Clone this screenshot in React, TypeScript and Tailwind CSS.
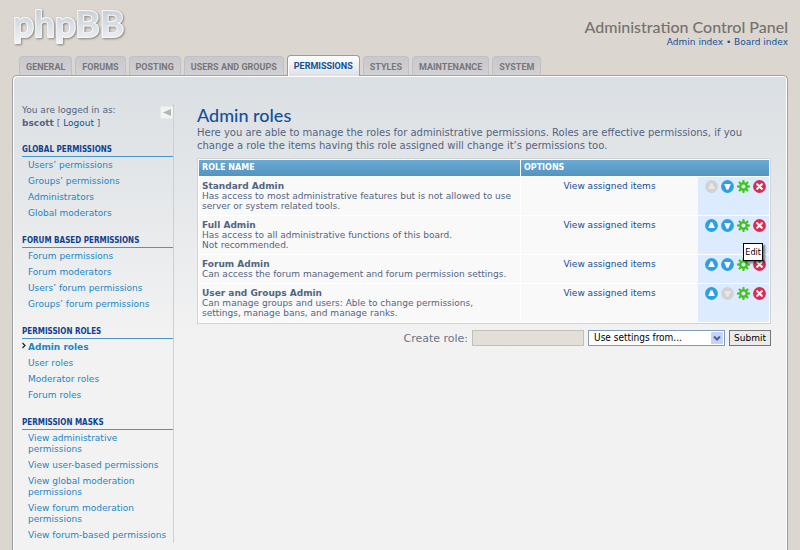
import React from "react";

const VERDANA = "font-['DejaVu_Sans',Verdana,sans-serif]";

const tabs = [
  "General",
  "Forums",
  "Posting",
  "Users and groups",
  "Permissions",
  "Styles",
  "Maintenance",
  "System",
];

const menu = [
  {
    title: "Global permissions",
    items: ["Users’ permissions", "Groups’ permissions", "Administrators", "Global moderators"],
  },
  {
    title: "Forum based permissions",
    items: [
      "Forum permissions",
      "Forum moderators",
      "Users’ forum permissions",
      "Groups’ forum permissions",
    ],
  },
  {
    title: "Permission roles",
    items: ["Admin roles", "User roles", "Moderator roles", "Forum roles"],
  },
  {
    title: "Permission masks",
    items: [
      "View administrative permissions",
      "View user-based permissions",
      "View global moderation permissions",
      "View forum moderation permissions",
      "View forum-based permissions",
    ],
  },
];

const roles = [
  {
    name: "Standard Admin",
    lines: [
      "Has access to most administrative features but is not allowed to use",
      "server or system related tools.",
    ],
  },
  {
    name: "Full Admin",
    lines: ["Has access to all administrative functions of this board.", "Not recommended."],
  },
  {
    name: "Forum Admin",
    lines: ["Can access the forum management and forum permission settings."],
    tooltip: true,
  },
  {
    name: "User and Groups Admin",
    lines: [
      "Can manage groups and users: Able to change permissions,",
      "settings, manage bans, and manage ranks.",
    ],
  },
];

function Logo() {
  return (
    <svg width="120" height="52" viewBox="0 0 120 52" role="img" aria-label="phpBB">
      <defs>
        <linearGradient id="logo-fill" x1="0" y1="0" x2="0" y2="1">
          <stop offset="0.2" stopColor="#c6ced5" />
          <stop offset="0.6" stopColor="#dbe1e5" />
          <stop offset="1" stopColor="#f4f6f8" />
        </linearGradient>
        <filter id="logo-shadow" x="-10%" y="-10%" width="120%" height="130%">
          <feDropShadow dx="1" dy="1" stdDeviation="1" floodColor="#6f6b66" floodOpacity="0.8" />
        </filter>
      </defs>
      <text
        x="1"
        y="37"
        fontFamily="Lato, sans-serif"
        fontSize="37"
        fontWeight="700"
        fill="url(#logo-fill)"
        stroke="#f8f9fa"
        strokeWidth="2"
        strokeLinejoin="round"
        paintOrder="stroke"
        filter="url(#logo-shadow)"
      >
        phpBB
      </text>
    </svg>
  );
}

function MoveIcon({ down, disabled }: { down?: boolean; disabled?: boolean }) {
  return (
    <svg width="13" height="13" viewBox="0 0 13 13" aria-hidden="true">
      <circle cx="6.5" cy="6.5" r="6.4" fill={disabled ? "#d2d2d2" : "#2f9fe3"} />
      <path
        d={down ? "M3.2 4h6.6L7.4 9.8H5.6z" : "M3.2 9h6.6L7.4 3.2H5.6z"}
        fill={disabled ? "#e8e8e8" : "#ffffff"}
      />
    </svg>
  );
}

function GearIcon() {
  const angles = [0, 45, 90, 135, 180, 225, 270, 315];
  return (
    <svg width="13" height="13" viewBox="0 0 13 13" aria-hidden="true">
      {angles.map((a) => (
        <path
          key={a}
          d="M5.2 3.4L5.6 0h1.8L7.8 3.4z"
          fill="#3fc41c"
          transform={`rotate(${a} 6.5 6.5)`}
        />
      ))}
      <circle cx="6.5" cy="6.5" r="3.2" fill="none" stroke="#3fc41c" strokeWidth="2.2" />
    </svg>
  );
}

function DeleteIcon() {
  return (
    <svg width="13" height="13" viewBox="0 0 13 13" aria-hidden="true">
      <circle cx="6.5" cy="6.5" r="6.4" fill="#dc2a50" />
      <path d="M4.2 4.2l4.6 4.6M8.8 4.2l-4.6 4.6" stroke="#fff" strokeWidth="2.2" strokeLinecap="round" />
    </svg>
  );
}

function Header() {
  return (
    <header className="flex h-[55px] items-start justify-between px-3">
      <Logo />
      <div className="pt-[17px] text-right">
        <h1 className="font-[Lato,sans-serif] text-[16px] font-medium leading-[19px] text-[#75726e]">
          Administration Control Panel
        </h1>
        <p className="text-[9px] leading-[12px] text-[#115098]">
          <a href="#admin">Admin index</a> • <a href="#board">Board index</a>
        </p>
      </div>
    </header>
  );
}

function Tabs() {
  return (
    <nav className="relative flex items-end gap-[3px] pl-[19px]">
      {tabs.map((t) => {
        const active = t === "Permissions";
        return (
          <a
            key={t}
            href={"#" + t}
            className={
              "rounded-t-[4px] border border-b-0 px-1.5 font-[Roboto,sans-serif] text-[9px] font-bold uppercase leading-[12px] " +
              (active
                ? "-mb-px border-[#9c9a9c] bg-linear-to-b from-white to-[#dde0e4] pb-[4px] pt-[4px] text-[#115098] shadow-[inset_0_1px_0_#fff,inset_1px_0_0_#fff]"
                : "border-[#c3c0c1] bg-linear-to-b from-[#c9c9cd] to-[#d1d1d5] pb-[2px] pt-[4px] text-[#767676]")
            }
          >
            {t}
          </a>
        );
      })}
    </nav>
  );
}

function Sidebar() {
  return (
    <aside className="w-[152px] shrink-0 self-start border-r border-[#ccd0d4]">
      <div className="flex items-start justify-between">
        <p className="text-[9px] leading-[13px] text-[#536482]">
          You are logged in as:
          <br />
          <strong>bscott</strong> [ <a href="#logout" className="text-[#115098]">Logout</a> ]
        </p>
        <button
          type="button"
          aria-label="Hide menu"
          className="mt-[2px] flex size-[13px] items-center justify-center border border-r-0 border-[#e6e8ea] bg-[#f2f3f3]"
        >
          <svg width="8" height="7" viewBox="0 0 8 7" aria-hidden="true">
            <path d="M0 3.5L8 0v7z" fill="#b4b4b4" />
          </svg>
        </button>
      </div>
      {menu.map((s) => (
        <section key={s.title} className="pt-[15px]">
          <h2 className="border-b border-[#4a96c8] pb-px font-['DejaVu_Sans_Condensed','DejaVu_Sans',sans-serif] text-[8px] font-bold uppercase leading-[10px] text-[#0f3f90]">
            {s.title}
          </h2>
          <ul>
            {s.items.map((i) => (
              <li key={i} className="flex pb-[2px] pr-1 pt-[3px] text-[9px] leading-[11px] text-[#1c86c4]">
                <span className="w-[6px] shrink-0">
                  {i === "Admin roles" && (
                    <svg width="4" height="7" viewBox="0 0 4 7" aria-hidden="true">
                      <path d="M0.5 1L3 3.5L0.5 6" fill="none" stroke="#222" strokeWidth="1.2" />
                    </svg>
                  )}
                </span>
                <a href={"#" + i} className={i === "Admin roles" ? "font-bold" : ""}>
                  {i}
                </a>
              </li>
            ))}
          </ul>
        </section>
      ))}
    </aside>
  );
}

function RolesTable() {
  return (
    <div className="mt-[6px] border border-[#d0d3d6] bg-white p-px">
      <table className="w-full border-separate border-spacing-0 text-[9px] leading-[10px]">
        <thead>
          <tr className="bg-linear-to-b from-[#6aaad3] to-[#5294c0] text-left text-[8px] uppercase text-white">
            <th className="w-[322px] border-r border-white px-[3px] py-[3px]">Role name</th>
            <th colSpan={2} className="px-[3px] py-[3px]">Options</th>
          </tr>
        </thead>
        <tbody>
          {roles.map((r, n) => (
            <tr key={r.name} className="bg-[#f9f9f9] align-top">
              <td className="border-r border-t border-white px-[3px] py-1 text-[#536482]">
                <strong className="block">{r.name}</strong>
                {r.lines.map((l) => (
                  <span key={l} className="block whitespace-nowrap">{l}</span>
                ))}
              </td>
              <td className="border-t border-white py-1 text-center text-[#115098]">
                <a href="#items">View assigned items</a>
              </td>
              <td className="w-[71px] border-t border-white bg-[#dcebfe] py-[3px]">
                <div className="relative flex justify-end gap-[3px] pr-[3px]">
                  <button type="button" aria-label="Move up" disabled={n === 0}>
                    <MoveIcon disabled={n === 0} />
                  </button>
                  <button type="button" aria-label="Move down" disabled={n === 3}>
                    <MoveIcon down disabled={n === 3} />
                  </button>
                  <button type="button" aria-label="Edit">
                    <GearIcon />
                  </button>
                  <button type="button" aria-label="Delete">
                    <DeleteIcon />
                  </button>
                  {r.tooltip && (
                    <span
                      role="tooltip"
                      className="absolute bottom-[10px] right-[6px] border border-black bg-white px-px py-[2px] font-['DejaVu_Sans_Condensed','DejaVu_Sans',sans-serif] text-[9px] leading-[12px] text-black shadow-[2px_2px_2px_rgba(0,0,0,0.5)]"
                    >
                      Edit
                    </span>
                  )}
                </div>
              </td>
            </tr>
          ))}
        </tbody>
      </table>
    </div>
  );
}

function CreateForm() {
  return (
    <form className="mt-[6px] flex items-center justify-end gap-1" onSubmit={(e) => e.preventDefault()}>
      <label htmlFor="role" className="text-[11px] leading-[15px] text-[#6a7488]">
        Create role:
      </label>
      <input
        id="role"
        type="text"
        className="h-4 w-[112px] border border-[#c0c0ba] bg-[#e3dfd8] px-1 text-[9px]"
      />
      <div className="relative">
        <select
          aria-label="Use settings from"
          className="block h-4 w-[137px] appearance-none border border-[#7f9db9] bg-white pl-[5px] font-['DejaVu_Sans_Condensed','DejaVu_Sans',sans-serif] text-[10px] leading-[14px] text-black"
        >
          <option>Use settings from...</option>
        </select>
        <svg
          width="12"
          height="12"
          viewBox="0 0 12 12"
          aria-hidden="true"
          className="pointer-events-none absolute right-[2px] top-[2px]"
        >
          <rect width="12" height="12" rx="1" fill="#c3d3fb" />
          <path d="M3 4.5L6 7.5L9 4.5" fill="none" stroke="#4d6185" strokeWidth="2" />
        </svg>
      </div>
      <button
        type="submit"
        className="h-4 border border-[#777] bg-[#ebebeb] px-1 text-[9px] leading-[14px] text-black"
      >
        Submit
      </button>
    </form>
  );
}

export default function App() {
  return (
    <div className={"flex min-h-screen flex-col bg-[#dbd7d0] " + VERDANA}>
      <Header />
      <Tabs />
      <div className="mx-3 flex flex-1 gap-[23px] rounded-t-[5px] border border-b-0 border-[#a3a1a2] bg-[#f2f2f2] bg-linear-to-b from-[#dadfe3] to-[#f2f2f2] to-[260px] pb-[7px] pl-[9px] pr-4 pt-[28px] shadow-[inset_1px_1px_0_#fff,inset_-1px_0_0_#fff]">
        <Sidebar />
        <main className="min-w-0 flex-1">
          <h2 className="font-[Lato,sans-serif] text-[18px] font-medium leading-[22px] text-[#115098]">
            Admin roles
          </h2>
          <p className="text-[10px] leading-[13px] text-[#536482]">
            Here you are able to manage the roles for administrative permissions. Roles are effective
            permissions, if you change a role the items having this role assigned will change it’s
            permissions too.
          </p>
          <RolesTable />
          <CreateForm />
        </main>
      </div>
    </div>
  );
}
